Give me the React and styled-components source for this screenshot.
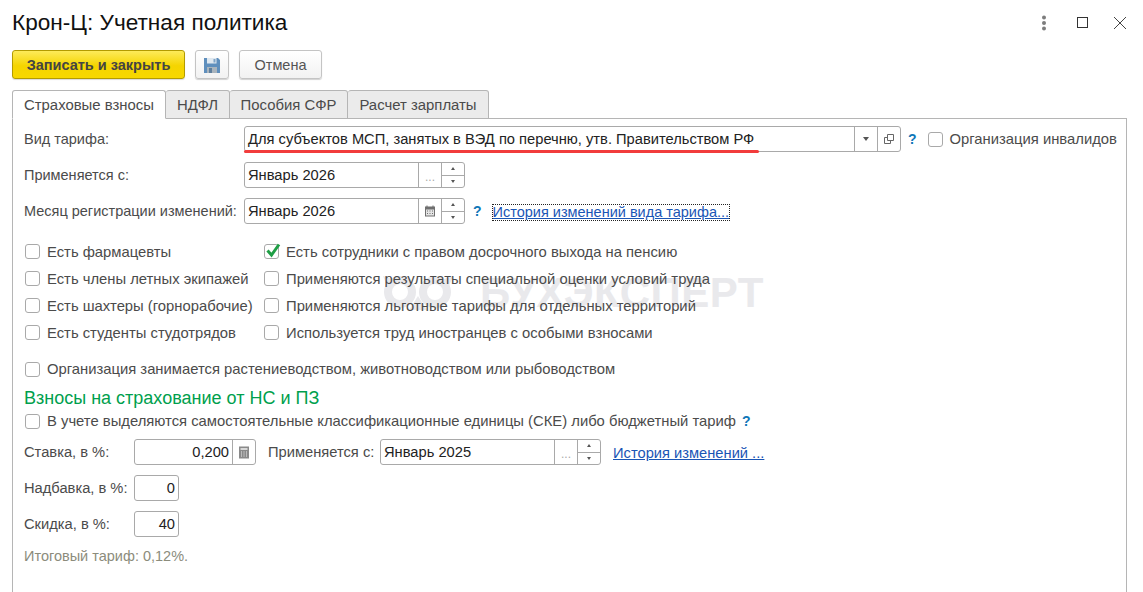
import React from "react";
import styled, { createGlobalStyle } from "styled-components";

const GlobalStyle = createGlobalStyle`
  html, body {
    margin: 0;
    padding: 0;
    height: 592px;
    overflow: hidden;
    background: #fff;
  }
  body {
    font-family: "Liberation Sans", Arial, sans-serif;
    font-size: 14.7px;
    color: #4b4b4b;
  }
`;

const FLAGS_LEFT = [
  "Есть фармацевты",
  "Есть члены летных экипажей",
  "Есть шахтеры (горнорабочие)",
  "Есть студенты студотрядов",
];

const FLAGS_RIGHT = [
  { text: "Есть сотрудники с правом досрочного выхода на пенсию", checked: true },
  { text: "Применяются результаты специальной оценки условий труда" },
  { text: "Применяются льготные тарифы для отдельных территорий" },
  { text: "Используется труд иностранцев с особыми взносами" },
];

function Check({ checked, children }) {
  return (
    <CheckRow>
      <CheckBox>
        {checked && (
          <CheckMark width="18" height="18" viewBox="0 0 18 18">
            <path d="M3.5 8.5 L7.5 13 L15 2.5" fill="none" stroke="#1f9e45" strokeWidth="3" />
          </CheckMark>
        )}
      </CheckBox>
      {children}
    </CheckRow>
  );
}

function Spin() {
  return (
    <SpinBox>
      <SpinPart>
        <Arrow $up />
      </SpinPart>
      <SpinPart>
        <Arrow />
      </SpinPart>
    </SpinBox>
  );
}

function CalendarIcon() {
  return (
    <svg width="12" height="12" viewBox="0 0 12 12">
      <rect x="1" y="1.5" width="10" height="10" fill="#6f6f6f" />
      <rect x="2" y="4.5" width="8" height="6" fill="#e4e4e4" />
      <path d="M3 0.5v2M9 0.5v2" stroke="#6f6f6f" />
      <path d="M3 6h1M5.5 6h1M8 6h1M3 8.5h1M5.5 8.5h1M8 8.5h1" stroke="#6f6f6f" />
    </svg>
  );
}

function CalcIcon() {
  return (
    <svg width="12" height="13" viewBox="0 0 12 13">
      <rect x="1" y="0.5" width="10" height="12" fill="#8a8a8a" />
      <rect x="2.5" y="2" width="7" height="2" fill="#d8d8d8" />
      <path
        d="M3 6h1M5.5 6h1M8 6h1M3 8h1M5.5 8h1M8 8h1M3 10h1M5.5 10h1M8 10h1"
        stroke="#eee"
      />
    </svg>
  );
}

function SaveIcon() {
  return (
    <svg width="16" height="16" viewBox="0 0 16 16">
      <path d="M0 1 H14 L16 3 V16 H0 Z" fill="#5f8fbd" />
      <rect x="3" y="1" width="9.5" height="5.5" fill="#dfe8f0" />
      <rect x="9.5" y="2" width="2" height="3.5" fill="#7fa3c6" />
      <rect x="3" y="10" width="10" height="6" fill="#a9b4bd" />
      <rect x="5" y="11" width="3" height="5" fill="#5f7f9d" />
    </svg>
  );
}

export default function App() {
  return (
    <Page>
      <GlobalStyle />
      <Header>
        <Title>Крон-Ц: Учетная политика</Title>
        <WindowButtons>
          <svg width="6" height="16" viewBox="0 0 6 16">
            <circle cx="3" cy="2.5" r="2" fill="#7d7d7d" />
            <circle cx="3" cy="8" r="2" fill="#7d7d7d" />
            <circle cx="3" cy="13.5" r="2" fill="#7d7d7d" />
          </svg>
          <svg width="13" height="13" viewBox="0 0 13 13">
            <rect x="1.5" y="1.5" width="10" height="10" fill="none" stroke="#333" />
          </svg>
          <svg width="14" height="14" viewBox="0 0 14 14">
            <path d="M1 1 L13 13 M13 1 L1 13" stroke="#444" strokeWidth="1" />
          </svg>
        </WindowButtons>
      </Header>

      <Toolbar>
        <PrimaryButton>Записать и закрыть</PrimaryButton>
        <ToolButton $width={34}>
          <SaveIcon />
        </ToolButton>
        <ToolButton $width={83}>Отмена</ToolButton>
      </Toolbar>

      <Tabs>
        <Tab $active $width={154}>Страховые взносы</Tab>
        <Tab $width={64}>НДФЛ</Tab>
        <Tab $width={118}>Пособия СФР</Tab>
        <Tab $width={141}>Расчет зарплаты</Tab>
      </Tabs>

      <Panel>
        <Watermark>
          <svg width="70" height="34" viewBox="0 0 70 34">
            <circle cx="17" cy="16" r="12" fill="none" stroke="#e9e9ec" strokeWidth="8" />
            <circle cx="52" cy="16" r="12" fill="none" stroke="#e9e9ec" strokeWidth="8" />
            <path d="M0 0 L12 4 L4 10 Z M70 0 L58 4 L66 10 Z" fill="#e9e9ec" />
            <path d="M35 20 L44 34 H26 Z" fill="#e9e9ec" />
          </svg>
          БУХЭКСПЕРТ
        </Watermark>

        <FieldRow>
          <FieldLabel>Вид тарифа:</FieldLabel>
          <Field $width={657}>
            <FieldText>Для субъектов МСП, занятых в ВЭД по перечню, утв. Правительством РФ</FieldText>
            <FieldButton>
              <Caret />
            </FieldButton>
            <FieldButton>
              <svg width="12" height="12" viewBox="0 0 12 12">
                <path
                  d="M4.5 1.5h6v6h-6zM4.5 4.5h-3v6h6v-3"
                  fill="none"
                  stroke="#666"
                />
              </svg>
            </FieldButton>
            <RedUnderline />
          </Field>
          <Help $gap={7}>?</Help>
          <InlineCheck>
            <Check>Организация инвалидов</Check>
          </InlineCheck>
        </FieldRow>

        <FieldRow>
          <FieldLabel>Применяется с:</FieldLabel>
          <Field $width={221}>
            <FieldText>Январь 2026</FieldText>
            <FieldButton>
              <Dots>...</Dots>
            </FieldButton>
            <Spin />
          </Field>
        </FieldRow>

        <FieldRow>
          <FieldLabel>Месяц регистрации изменений:</FieldLabel>
          <Field $width={221}>
            <FieldText>Январь 2026</FieldText>
            <FieldButton>
              <CalendarIcon />
            </FieldButton>
            <Spin />
          </Field>
          <Help $gap={8}>?</Help>
          <FocusedLink>История изменений вида тарифа...</FocusedLink>
        </FieldRow>

        <FlagsGrid>
          <FlagsColumn>
            {FLAGS_LEFT.map((text) => (
              <Check key={text}>{text}</Check>
            ))}
          </FlagsColumn>
          <FlagsColumn>
            {FLAGS_RIGHT.map((flag) => (
              <Check key={flag.text} checked={flag.checked}>
                {flag.text}
              </Check>
            ))}
          </FlagsColumn>
        </FlagsGrid>

        <SingleCheck>
          <Check>Организация занимается растениеводством, животноводством или рыбоводством</Check>
        </SingleCheck>

        <SectionTitle>Взносы на страхование от НС и ПЗ</SectionTitle>

        <SingleCheck $flush>
          <Check>В учете выделяются самостоятельные классификационные единицы (СКЕ) либо бюджетный тариф</Check>
          <Help $gap={6}>?</Help>
        </SingleCheck>

        <RateRow>
          <RateLabel>Ставка, в %:</RateLabel>
          <Field $width={122}>
            <NumberText>0,200</NumberText>
            <FieldButton>
              <CalcIcon />
            </FieldButton>
          </Field>
          <SideLabel>Применяется с:</SideLabel>
          <Field $width={221}>
            <FieldText>Январь 2025</FieldText>
            <FieldButton>
              <Dots>...</Dots>
            </FieldButton>
            <Spin />
          </Field>
          <PlainLink>История изменений ...</PlainLink>
        </RateRow>

        <RateRow>
          <RateLabel>Надбавка, в %:</RateLabel>
          <Field $width={45}>
            <NumberText>0</NumberText>
          </Field>
        </RateRow>

        <RateRow>
          <RateLabel>Скидка, в %:</RateLabel>
          <Field $width={45}>
            <NumberText>40</NumberText>
          </Field>
        </RateRow>

        <Total>Итоговый тариф: 0,12%.</Total>
      </Panel>
    </Page>
  );
}

// ----- Styled Components -----

const Page = styled.div`
  height: 592px;
  overflow: hidden;
  padding: 0 16px 0 12px;
  box-sizing: border-box;
`;

const Header = styled.div`
  display: flex;
  align-items: center;
  justify-content: space-between;
  height: 50px;
  box-sizing: border-box;
  padding-bottom: 5px;
`;

const Title = styled.h1`
  margin: 0;
  font-size: 22.6px;
  font-weight: 400;
  color: #111;
`;

const WindowButtons = styled.div`
  display: flex;
  align-items: center;
  gap: 24px;

  svg:first-child {
    margin-right: 5px;
  }
`;

const Toolbar = styled.div`
  display: flex;
  gap: 10px;
  height: 29px;
  font-size: 14.5px;
`;

const PrimaryButton = styled.div`
  display: flex;
  align-items: center;
  justify-content: center;
  width: 173px;
  box-sizing: border-box;
  border: 1px solid #b39b00;
  border-radius: 3px;
  background: linear-gradient(#fdeb5a, #f5d400 55%, #f7d800);
  box-shadow: 0 1px 1px rgba(0, 0, 0, 0.15);
  font-weight: 700;
  color: #444;
`;

const ToolButton = styled.div`
  display: flex;
  align-items: center;
  justify-content: center;
  width: ${(p) => p.$width}px;
  box-sizing: border-box;
  border: 1px solid #c4c4c4;
  border-radius: 3px;
  background: linear-gradient(#fff, #f2f2f2);
  box-shadow: 0 1px 1px rgba(0, 0, 0, 0.18);
  color: #555;
`;

const Tabs = styled.div`
  display: flex;
  margin-top: 11px;
  height: 28px;
  font-size: 14.9px;
`;

const Tab = styled.div`
  display: flex;
  align-items: center;
  justify-content: center;
  width: ${(p) => p.$width}px;
  box-sizing: border-box;
  border: 1px solid #b5b5b5;
  border-left-width: ${(p) => (p.$active ? 1 : 0)}px;
  border-bottom-color: ${(p) => (p.$active ? "#fff" : "#b5b5b5")};
  border-radius: 3px 3px 0 0;
  background: ${(p) => (p.$active ? "#fff" : "#ebebeb")};
  position: relative;
  z-index: 1;
  height: 29px;
`;

const Panel = styled.div`
  position: relative;
  box-sizing: border-box;
  height: 475px;
  border: 1px solid #b5b5b5;
  border-bottom: 0;
  padding: 7px 0 0 11px;
`;

const Watermark = styled.div`
  position: absolute;
  left: 370px;
  top: 150px;
  display: flex;
  align-items: center;
  gap: 27px;
  font-size: 42px;
  font-weight: 700;
  letter-spacing: 0.5px;
  color: #e9e9ec;
`;

const FieldRow = styled.div`
  position: relative;
  display: flex;
  align-items: center;
  height: 26px;
  margin-bottom: 10px;
`;

const FieldLabel = styled.div`
  width: 220px;
  flex: none;
  font-size: 14.5px;
  white-space: nowrap;
`;

const Field = styled.div`
  position: relative;
  display: flex;
  flex: none;
  width: ${(p) => p.$width}px;
  height: 26px;
  box-sizing: border-box;
  border: 1px solid #a9a9a9;
  border-radius: 3px;
  background: #fff;
`;

const FieldText = styled.div`
  flex: 1;
  min-width: 0;
  padding-left: 3px;
  line-height: 24px;
  color: #222;
  white-space: nowrap;
`;

const NumberText = styled(FieldText)`
  padding: 0 3px 0 0;
  text-align: right;
`;

const FieldButton = styled.div`
  display: flex;
  align-items: center;
  justify-content: center;
  flex: none;
  width: 22px;
  border-left: 1px solid #a9a9a9;
`;

const Dots = styled.span`
  color: #aaa;
  font-size: 12px;
  margin-top: 3px;
`;

const Caret = styled.span`
  width: 0;
  height: 0;
  border-left: 3px solid transparent;
  border-right: 3px solid transparent;
  border-top: 4px solid #555;
`;

const SpinBox = styled.div`
  display: flex;
  flex-direction: column;
  flex: none;
  width: 22px;
  border-left: 1px solid #a9a9a9;
`;

const SpinPart = styled.div`
  flex: 1;
  display: flex;
  align-items: center;
  justify-content: center;
  & + & {
    border-top: 1px solid #a9a9a9;
  }
`;

const Arrow = styled.span`
  width: 0;
  height: 0;
  border-left: 2.5px solid transparent;
  border-right: 2.5px solid transparent;
  ${(p) => (p.$up ? "border-bottom: 3px solid #555;" : "border-top: 3px solid #555;")}
`;

const RedUnderline = styled.div`
  position: absolute;
  left: -1px;
  top: 23px;
  width: 515px;
  height: 3px;
  border-radius: 2px;
  background: #f23c3c;
`;

const Help = styled.span`
  margin-left: ${(p) => p.$gap}px;
  font-weight: 700;
  font-size: 14px;
  color: #0f77b8;
`;

const InlineCheck = styled.div`
  margin-left: 11px;
`;

const CheckRow = styled.label`
  display: flex;
  align-items: center;
  gap: 7px;
  font-size: 14.8px;
  white-space: nowrap;
`;

const CheckBox = styled.span`
  position: relative;
  flex: none;
  width: 15px;
  height: 15px;
  box-sizing: border-box;
  border: 1px solid #a9a9a9;
  border-radius: 3px;
  background: #fff;
`;

const CheckMark = styled.svg`
  position: absolute;
  left: -1px;
  top: -3px;
`;

const FocusedLink = styled.a`
  margin-left: 11px;
  margin-top: 2px;
  outline: 1px dotted #222;
  font-size: 14.5px;
  color: #1a55b5;
  text-decoration: underline;
  line-height: 15px;
`;

const PlainLink = styled.a`
  margin-left: 12px;
  margin-top: 2px;
  color: #1a55b5;
  text-decoration: underline;
`;

const FlagsGrid = styled.div`
  display: grid;
  grid-template-columns: 239px 1fr;
  margin: 14px 0 0 1px;
  position: relative;
`;

const FlagsColumn = styled.div`
  display: grid;
  grid-auto-rows: 27px;
  align-items: center;
`;

const SingleCheck = styled.div`
  position: relative;
  display: flex;
  align-items: center;
  height: 18px;
  margin: ${(p) => (p.$flush ? "4px 0 9px 1px" : "14px 0 0 1px")};
`;

const SectionTitle = styled.div`
  margin-top: 10px;
  position: relative;
  font-size: 18px;
  line-height: 20px;
  color: #009f4d;
`;

const RateRow = styled(FieldRow)``;

const RateLabel = styled.div`
  width: 110px;
  flex: none;
  white-space: nowrap;
`;

const SideLabel = styled.div`
  width: 112px;
  margin-left: 12px;
  white-space: nowrap;
`;

const Total = styled.div`
  position: relative;
  margin-top: 11px;
  font-size: 14.5px;
  color: #8c8c7c;
`;
